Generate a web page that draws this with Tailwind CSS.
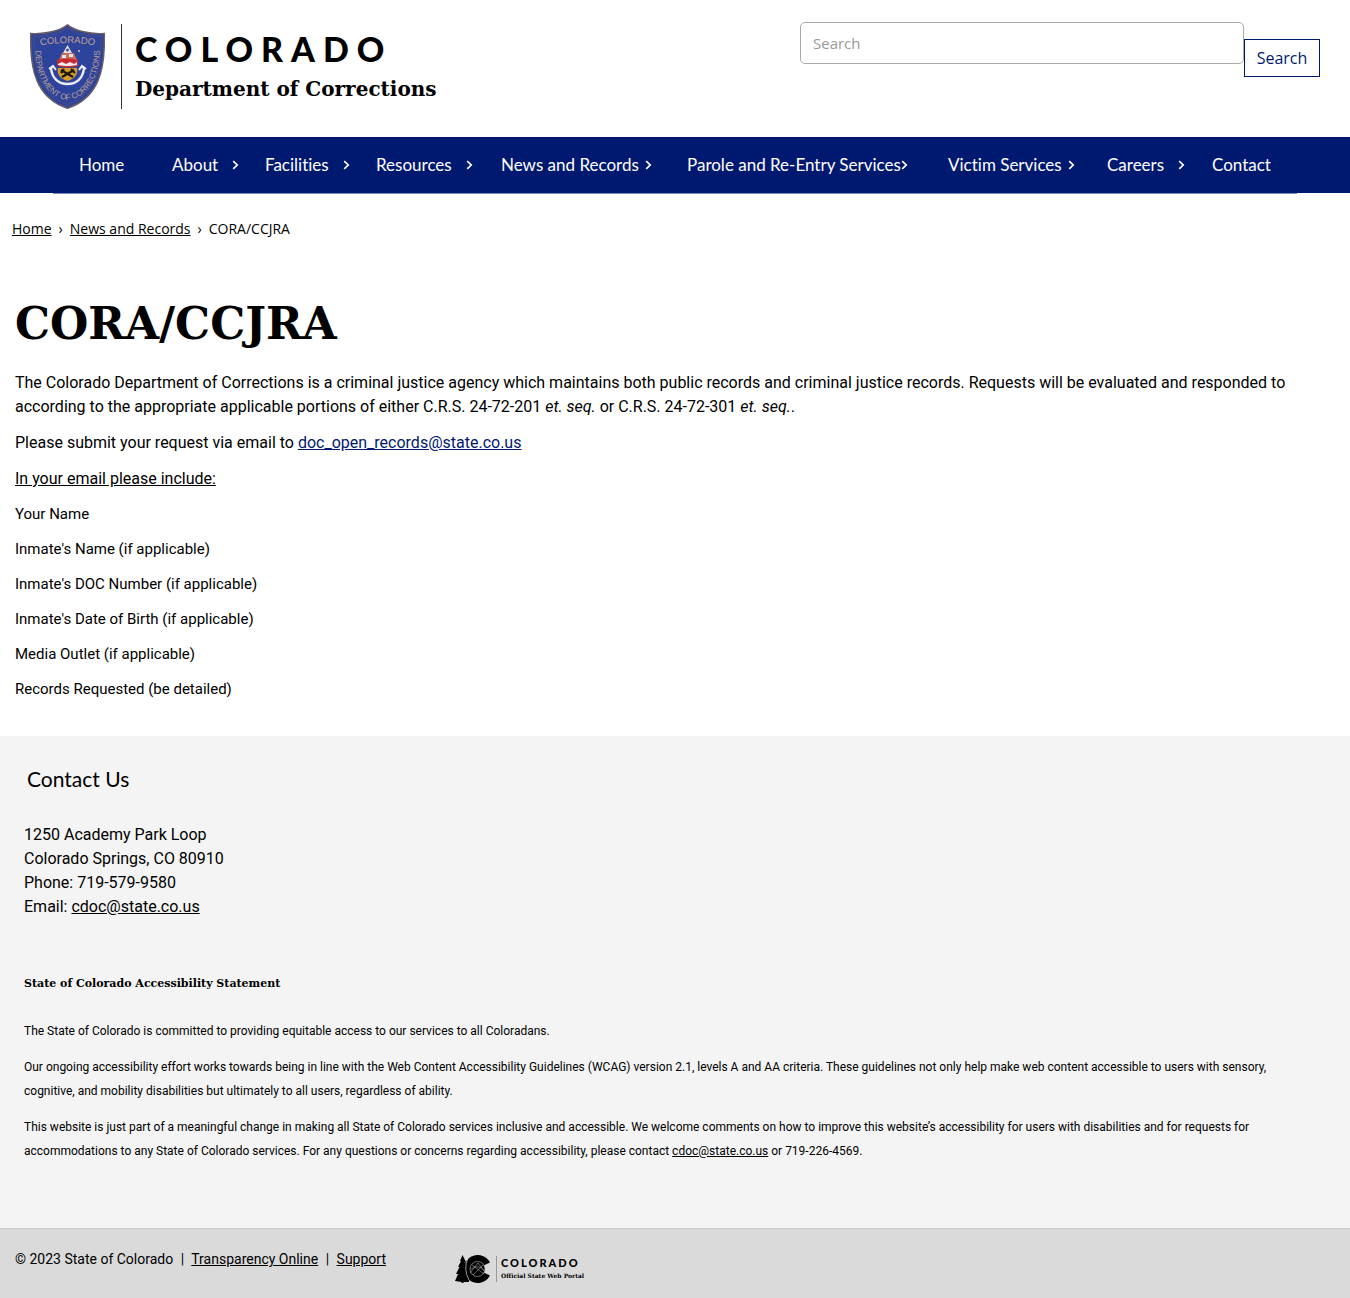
<!DOCTYPE html>
<html lang="en">
<head>
<meta charset="utf-8">
<meta name="viewport" content="width=device-width, initial-scale=1">
<title>CORA/CCJRA | Department of Corrections</title>
<script src="https://cdn.jsdelivr.net/npm/@tailwindcss/browser@4"></script>
</head>
<body class="flex min-h-screen flex-col bg-white font-['Roboto',sans-serif] text-black">
<svg class="hidden" aria-hidden="true">
  <symbol id="chev" viewBox="0 0 7 10"><path d="M1.2 1.2 5.2 5 1.2 8.8" fill="none" stroke="currentColor" stroke-width="1.7"/></symbol>
</svg>
<header class="flex h-[137px] items-start justify-between px-[30px]">
  <a href="#" class="flex pt-6" aria-label="Colorado Department of Corrections">
    <svg class="h-[85px] w-[75px]" viewBox="0 0 75 85" aria-hidden="true">
      <defs>
        <path id="arcTop" d="M8 22Q37.500 16 67 22"/>
        <path id="arcBot" d="M5.500 25C5 51 17 74 37.500 76C58 74 70 51 69.500 25"/>
      </defs>
      <path d="M37.500 .8C30 7 15 10.500 .8 9.500C-.5 47 7 74 37.500 84.200C68 74 75.500 47 74.200 9.500C60 10.500 45 7 37.500 .8Z" fill="#2c449c" stroke="#6b5b63" stroke-width="1.500"/>
      <path d="M37.500 4C30 9.500 17 13 4 12.500C3.500 46 11 71 37.500 80.500C64 71 71.500 46 71 12.500C58 13 45 9.500 37.500 4Z" fill="none" stroke="#554f7e" stroke-width=".8"/>
      <g fill="#c0a192" font-family="Liberation Sans">
        <text font-size="9.500"><textPath href="#arcTop" startOffset="50%" text-anchor="middle">COLORADO</textPath></text>
        <text font-size="8"><textPath href="#arcBot" startOffset="50%" text-anchor="middle">DEPARTMENT OF CORRECTIONS</textPath></text>
      </g>
      <path d="M37.500 21 42 29H33Z" fill="#e8dfe4"/><circle cx="37.500" cy="26" r="1.500" fill="#4a4f8c"/>
      <path d="M29 36 32 29H44L47 36Z" fill="#c96b58"/>
      <path d="M32 31H36V34H32ZM39 30H43V33H39Z" fill="#dfe6ee"/><circle cx="49" cy="27" r="1" fill="#e5c9a2"/>
      <path d="M27 36Q37.500 33 48 36V42Q37.500 45 27 42Z" fill="#c62b34"/>
      <path d="M28 40 32 38 36 40 40 38 44 40 47 38V41Q37 43 28 41Z" fill="#f4ecef"/>
      <path d="M28 44H47Q49 53 37.500 57Q26 53 28 44Z" fill="#d79a2b"/>
      <path d="m31 46 12 7M44 46l-12 7M34 45l-3 4M41 45l4 4" stroke="#1b1710" stroke-width="2.200"/>
      <path d="M21 44C22 55 29 60 37.500 60C46 60 53 55 54 44" fill="none" stroke="#eceaf3" stroke-width="2.500"/>
      <path d="m19 45 4-3 3 4M56 45l-4-3-3 4" fill="none" stroke="#eceaf3" stroke-width="2"/>
    </svg>
    <span class="ml-4 border-l border-[#333] pl-[13px] whitespace-nowrap">
      <span class="block pt-2 font-['Lato',sans-serif] text-[34px] leading-[34px] font-black tracking-[8px]">COLORADO</span>
      <span class="block pt-3 font-['DejaVu_Serif',serif] text-[20px] leading-[22px] font-bold">Department of Corrections</span>
    </span>
  </a>
  <form class="flex w-[520px] items-start pt-[22px] font-['Open_Sans',sans-serif]" role="search">
    <input type="search" aria-label="Search" placeholder="Search" class="h-[42px] min-w-0 flex-1 rounded-[5px] border border-[#aaa] px-3 text-[15px] placeholder:text-[#999]">
    <button type="button" class="mt-[17px] h-[38px] w-[76px] border border-[#001970] bg-white text-[16px] text-[#001970]">Search</button>
  </form>
</header>
<nav class="bg-[#001970] px-[53px] font-['Lato',sans-serif] text-[17px] text-white [font-variant-ligatures:none]" aria-label="Main">
  <ul class="grid h-14 grid-cols-[93fr_93fr_111fr_125fr_186fr_261fr_159fr_105fr_111fr] items-center whitespace-nowrap *:min-w-0 *:pl-[26px]">
    <li><a href="#">Home</a></li>
    <li><a href="#" class="flex items-center">About<svg class="ml-[14px] h-[10px] w-[7px] shrink-0"><use href="#chev"/></svg></a></li>
    <li><a href="#" class="flex items-center">Facilities<svg class="ml-[14px] h-[10px] w-[7px] shrink-0"><use href="#chev"/></svg></a></li>
    <li><a href="#" class="flex items-center">Resources<svg class="ml-[14px] h-[10px] w-[7px] shrink-0"><use href="#chev"/></svg></a></li>
    <li><a href="#" class="flex items-center">News and Records<svg class="ml-[6px] h-[10px] w-[7px] shrink-0"><use href="#chev"/></svg></a></li>
    <li><a href="#" class="flex items-center">Parole and Re-Entry Services<svg class="h-[10px] w-[7px] shrink-0"><use href="#chev"/></svg></a></li>
    <li><a href="#" class="flex items-center">Victim Services<svg class="ml-[6px] h-[10px] w-[7px] shrink-0"><use href="#chev"/></svg></a></li>
    <li><a href="#" class="flex items-center">Careers<svg class="ml-[14px] h-[10px] w-[7px] shrink-0"><use href="#chev"/></svg></a></li>
    <li><a href="#">Contact</a></li>
  </ul>
</nav>
<div class="mx-[53px] h-px bg-[#7f8cb8]"></div>
<main class="flex-1 pb-[34px]">
  <nav aria-label="Breadcrumb" class="flex gap-[7px] px-3 pt-[23px] font-['Open_Sans',sans-serif] text-[14px] leading-6">
    <a href="#" class="underline">Home</a><span>›</span><a href="#" class="underline">News and Records</a><span>›</span><span>CORA/CCJRA</span>
  </nav>
  <div class="px-[15px] pt-[57px] text-[16px] leading-6">
    <h1 class="font-['DejaVu_Serif',serif] text-[44px] leading-[52px] font-bold">CORA/CCJRA</h1>
    <p class="mt-[21px]">The Colorado Department of Corrections is a criminal justice agency which maintains both public records and criminal justice records. Requests will be evaluated and responded to according to the appropriate applicable portions of either C.R.S. 24-72-201 <em>et. seq.</em> or C.R.S. 24-72-301 <em>et. seq.</em>.</p>
    <p class="mt-3">Please submit your request via email to <a href="#" class="text-[#001970] underline">doc_open_records@state.co.us</a></p>
    <p class="mt-3 underline">In your email please include:</p>
    <div class="mt-3 space-y-3 text-[15px] leading-[23px]">
      <p>Your Name</p>
      <p>Inmate's Name (if applicable)</p>
      <p>Inmate's DOC Number (if applicable)</p>
      <p>Inmate's Date of Birth (if applicable)</p>
      <p>Media Outlet (if applicable)</p>
      <p>Records Requested (be detailed)</p>
    </div>
  </div>
</main>
<footer>
  <div class="bg-[#f4f4f4] px-6 pt-[29px] pb-[65px] text-[16px] leading-6">
    <h2 class="pl-[3px] font-['Lato',sans-serif] text-[21px] leading-7">Contact Us</h2>
    <address class="mt-[30px] not-italic">1250 Academy Park Loop<br>Colorado Springs, CO 80910<br>Phone: 719-579-9580<br>Email: <a href="#" class="underline">cdoc@state.co.us</a></address>
    <div class="space-y-3 pr-[38px] text-[12px]">
      <h3 class="mt-[53px] mb-[23px] font-['DejaVu_Serif',serif] text-[11px] leading-6 font-bold">State of Colorado Accessibility Statement</h3>
      <p>The State of Colorado is committed to providing equitable access to our services to all Coloradans.</p>
      <p>Our ongoing accessibility effort works towards being in line with the Web Content Accessibility Guidelines (WCAG) version 2.1, levels A and AA criteria. These guidelines not only help make web content accessible to users with sensory, cognitive, and mobility disabilities but ultimately to all users, regardless of ability.</p>
      <p>This website is just part of a meaningful change in making all State of Colorado services inclusive and accessible. We welcome comments on how to improve this website’s accessibility for users with disabilities and for requests for accommodations to any State of Colorado services. For any questions or concerns regarding accessibility, please contact <a href="#" class="underline">cdoc@state.co.us</a> or 719-226-4569.</p>
    </div>
  </div>
  <div class="flex h-[70px] items-start border-t border-[#ccc] bg-[#dadada] px-[15px]">
    <p class="w-[440px] pt-[18px] text-[14px] leading-6">© 2023 State of Colorado <span class="mx-1">|</span> <a href="#" class="underline">Transparency Online</a> <span class="mx-1">|</span> <a href="#" class="underline">Support</a></p>
    <a href="#" class="flex items-center pt-[26px]" aria-label="Colorado Official State Web Portal">
      <svg class="h-7 w-[36px]" viewBox="0 0 36 28" aria-hidden="true">
        <path d="M7.500 0 11 7 9.500 7 12 13 10.500 13 14 20V27H8.500V28H6.500V27L0 26 3 19H1L4.500 12H3L6 6H5Z"/>
        <path d="M35 7.500A14 14 0 1 0 35 20.500L28.500 17.500A7 7 0 1 1 28.500 10.500Z"/>
        <circle cx="22.500" cy="14" r="7.500"/>
        <path d="M13 3Q8 14 14 25" fill="none" stroke="#dadada" stroke-width=".7"/>
        <path d="m15 18 8-10 6 8M18 20l10-10M17 10l12 9M16 14q7-5 13 1" fill="none" stroke="#aaa" stroke-width=".6"/>
        <circle cx="22.500" cy="14" r="7.500" fill="none" stroke="#bbb" stroke-width=".6"/>
      </svg>
      <span class="ml-[5px] border-l border-[#999] pl-1">
        <span class="block font-['Lato',sans-serif] text-[11px] leading-[14px] font-black tracking-[2px]">COLORADO</span>
        <span class="block font-['DejaVu_Serif',serif] text-[6px] leading-[12px] font-bold">Official State Web Portal</span>
      </span>
    </a>
  </div>
</footer>
</body>
</html>
